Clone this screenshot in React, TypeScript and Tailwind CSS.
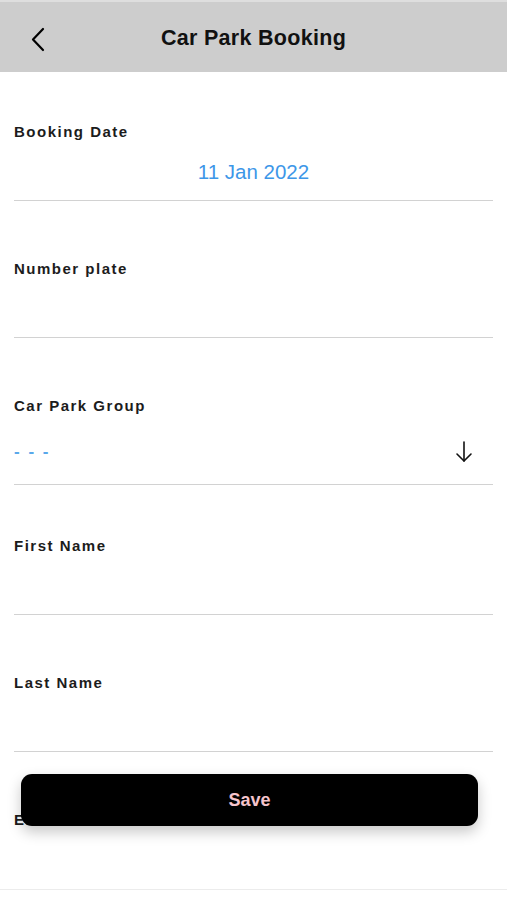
import { useState } from "react";

interface FieldProps {
  label: string;
  top: number;
  height: number;
  children?: React.ReactNode;
  full?: boolean;
}

const font = { fontFamily: '"Liberation Sans", Arial, sans-serif' };

const Field = ({ label, top, height, children, full }: FieldProps) => {
  return (
    <div
      className={full ? "border-b border-[#ececec]" : "mx-[14px] border-b border-[#d2d2d2]"}
      style={{ height, paddingTop: top }}
    >
      <div className={full ? "px-[14px]" : ""}>
        <p className="text-[15px] leading-[20px] font-bold tracking-[1.5px] text-[#1c1c1c]">{label}</p>
        {children}
      </div>
    </div>
  );
};

export default function App() {
  const [date] = useState("11 Jan 2022");

  return (
    <div className="relative w-[507px] h-[900px] bg-white overflow-hidden" style={font}>
      <div className="h-[72px] bg-[#cdcdcd] border-t-2 border-[#dedede] flex items-center relative pt-[3px]">
        <button className="absolute left-[28px] top-[25px] text-black">
          <svg width="20" height="26" viewBox="0 0 20 26" fill="none" stroke="currentColor" strokeWidth="2.2" strokeLinecap="round" strokeLinejoin="round">
            <path d="M15 2 L5 12.5 L15 23" />
          </svg>
        </button>
        <h1 className="w-full text-center text-[21.5px] font-bold text-[#111] tracking-[0.3px]">Car Park Booking</h1>
      </div>

      <Field label="Booking Date" top={50} height={129}>
        <p className="mt-[16px] text-center text-[20.5px] leading-[28px] text-[#3d97e8]">{date}</p>
      </Field>

      <Field label="Number plate" top={58} height={137} />

      <Field label="Car Park Group" top={58} height={147}>
        <div className="mt-[24px] flex items-center justify-between">
          <span className="text-[17px] leading-[24px] font-bold text-[#5aa8ea] tracking-[2px]">- - -</span>
          <svg className="mr-[20px]" width="18" height="24" viewBox="0 0 18 24" fill="none" stroke="#111" strokeWidth="1.6" strokeLinecap="round" strokeLinejoin="round">
            <path d="M9 2 V21" />
            <path d="M2 14 L9 21 L16 14" />
          </svg>
        </div>
      </Field>

      <Field label="First Name" top={51} height={130} />

      <Field label="Last Name" top={58} height={137} />

      <Field label="Email" top={58} height={138} full />

      <button className="absolute left-[21px] top-[774px] w-[457px] h-[52px] rounded-[11px] bg-black text-[#f5c4cc] text-[18px] font-bold shadow-[0_6px_14px_rgba(0,0,0,0.22)]">
        Save
      </button>
    </div>
  );
}
